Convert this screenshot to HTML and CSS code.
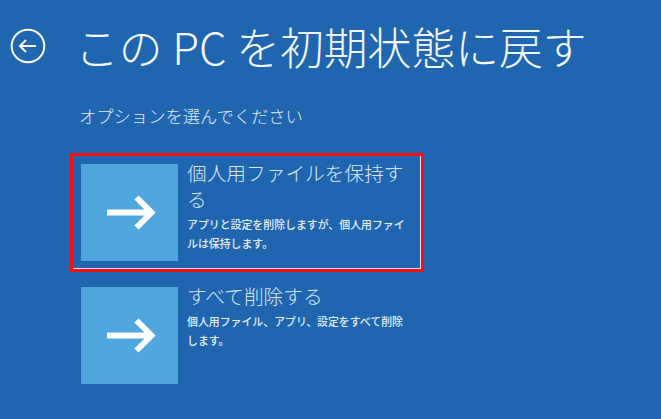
FILE: index.html
```html
<!DOCTYPE html>
<html lang="ja">
<head>
<meta charset="utf-8">
<title>このPCを初期状態に戻す</title>
<link rel="stylesheet" href="styles.css">
</head>
<body>
<div class="page">
  <header class="header">
    <svg class="back" width="36" height="36" viewBox="0 0 36 36" aria-hidden="true">
      <circle cx="18" cy="18" r="16.3" fill="none" stroke="#fff" stroke-width="2"/>
      <path d="M10 18 H26 M16 12 L10 18 L16 24" fill="none" stroke="#fff" stroke-width="2" stroke-linejoin="miter"/>
    </svg>
    <h1 class="title">この PC を初期状態に戻す</h1>
  </header>
  <p class="subtitle">オプションを選んでください</p>
  <div class="options">
    <div class="option option-focused">
      <div class="tile">
        <svg width="97" height="97" viewBox="0 0 97 97" aria-hidden="true">
          <path d="M26 48.5 H69 M55.5 33.5 L70.5 48.5 L55.5 63.5" fill="none" stroke="#fff" stroke-width="6"/>
        </svg>
      </div>
      <div class="text">
        <div class="opt-title">個人用ファイルを保持する</div>
        <div class="opt-desc">アプリと設定を削除しますが、個人用ファイルは保持します。</div>
      </div>
    </div>
    <div class="option">
      <div class="tile">
        <svg width="97" height="97" viewBox="0 0 97 97" aria-hidden="true">
          <path d="M26 48.5 H69 M55.5 33.5 L70.5 48.5 L55.5 63.5" fill="none" stroke="#fff" stroke-width="6"/>
        </svg>
      </div>
      <div class="text">
        <div class="opt-title">すべて削除する</div>
        <div class="opt-desc">個人用ファイル、アプリ、設定をすべて削除します。</div>
      </div>
    </div>
  </div>
</div>
</body>
</html>
```
FILE: styles.css
```css
html, body {
  margin: 0;
  padding: 0;
}
body {
  background: #1f65b0;
  font-family: "Noto Sans CJK JP", "Noto Sans", sans-serif;
  color: #fff;
  width: 661px;
  height: 419px;
  overflow: hidden;
}
.page {
  padding-top: 21px;
}
.header {
  display: flex;
  align-items: center;
  height: 50px;
}
.back {
  margin-left: 10px;
  flex: none;
}
.title {
  margin: 0 0 0 29px;
  font-size: 43.8px;
  font-weight: 300;
  line-height: 50px;
  color: #f4f7fb;
  white-space: nowrap;
}
.subtitle {
  margin: 33px 0 0 79px;
  font-size: 17.3px;
  line-height: 24px;
  font-weight: 300;
  color: #e4ecf5;
}
.options {
  margin: 25px 0 0 70px;
  display: flex;
  flex-direction: column;
  gap: 4px;
}
.option {
  display: flex;
  align-items: flex-start;
  width: 354px;
  padding: 8px;
  border: 3px solid transparent;
  box-sizing: border-box;
  height: 119px;
}
.option-focused {
  border-color: #ff0d0d;
  box-shadow: inset -1px -1px 0 #d9e6f4;
}
.tile {
  flex: none;
  width: 97px;
  height: 97px;
  background: #4ea6dc;
}
.tile svg {
  display: block;
}
.text {
  margin: -4px 0 0 9px;
  width: 225px;
}
.opt-title {
  font-size: 19.7px;
  line-height: 26px;
  font-weight: 300;
  color: #dde7f2;
}
.opt-desc {
  margin-top: 3px;
  font-size: 10.9px;
  line-height: 19px;
  font-weight: 500;
  color: #e6eef7;
}
```
